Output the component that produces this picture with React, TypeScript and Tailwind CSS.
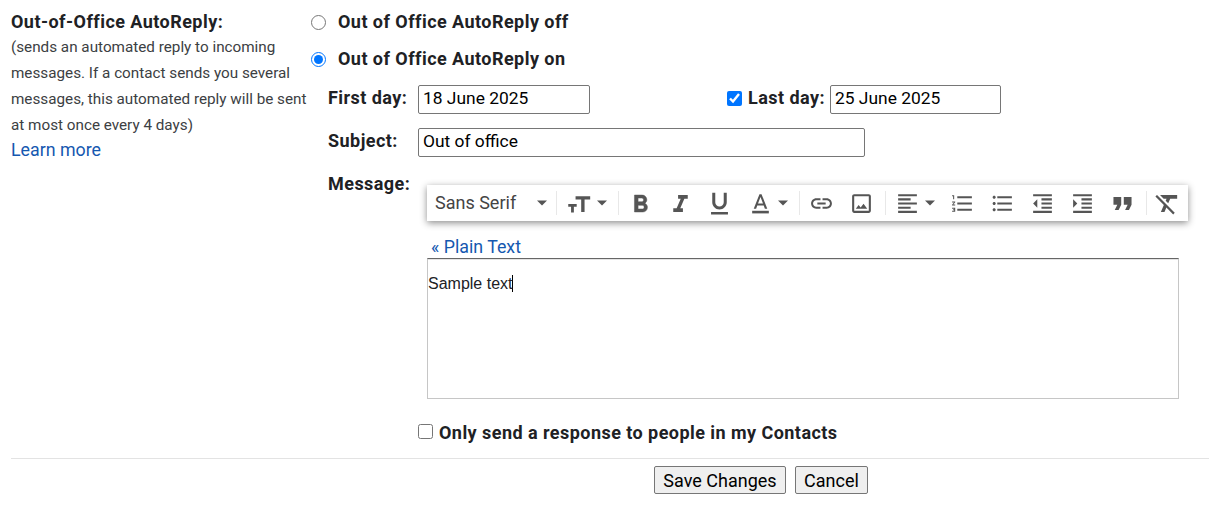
import React from "react";

const Arrow = ({ className = "" }: { className?: string }) => (
  <svg width="12" height="6" viewBox="0 0 12 6" className={`shrink-0 ${className}`}><path d="M1 0.5h10L6 5.5z" fill="#555" /></svg>
);

const Ico = ({ size = 25, children }: { size?: number; children: React.ReactNode }) => (
  <svg width={size} height={size} viewBox="0 0 24 24" fill="#555" className="shrink-0">{children}</svg>
);

const Sep = () => <div className="w-px h-[24px] bg-[#e8e8e8] shrink-0" />;

const Btn = ({ w = "w-[40px]", children }: { w?: string; children: React.ReactNode }) => (
  <div className={`${w} h-full flex items-center justify-center shrink-0`}>{children}</div>
);

function Toolbar() {
  return (
    <div className="w-[761px] h-[36px] flex items-center bg-white shadow-[0_2px_7px_rgba(0,0,0,0.45)] pl-[8px] font-['Roboto',sans-serif]">
      <span className="text-[18px] text-[#444] w-[101px] shrink-0 whitespace-nowrap pb-[2px]">Sans Serif</span>
      <Arrow />
      <div className="w-[8px] shrink-0" />
      <Sep />
      <div className="w-[10px] shrink-0" />
      <Btn w="w-[24px]">
        <Ico size={27}><path d="M9 5.500v3h5v11h3v-11h5v-3z" transform="translate(-0.5 0)" /><path d="M2 12.500h7.500v2.400H7v5H4.500v-5H2z" /></Ico>
      </Btn>
      <div className="w-[5px] shrink-0" />
      <Arrow />
      <div className="w-[10px] shrink-0" />
      <Sep />
      <Btn w="w-[43px]">
        <Ico size={29}><path stroke="#555" strokeWidth="0.4" d="M15.600 11.800c1-.7 1.650-1.750 1.650-2.800 0-2.300-1.750-4-4-4H7v14h7.050c2.100 0 3.700-1.700 3.700-3.800 0-1.500-.85-2.800-2.150-3.400zM10 7.500h3c.83 0 1.500.67 1.500 1.500s-.67 1.500-1.500 1.500h-3v-3zm3.500 9H10v-3h3.500c.83 0 1.500.67 1.500 1.500s-.67 1.500-1.500 1.500z" /></Ico>
      </Btn>
      <Btn w="w-[37px]">
        <Ico size={29}><path d="M10 5v3h2.200l-3.400 8H6v3h8v-3h-2.200l3.400-8H18V5z" /></Ico>
      </Btn>
      <Btn w="w-[41px]">
        <Ico size={29}><path d="M12 17c3.300 0 6-2.700 6-6V3h-2.500v8c0 1.900-1.600 3.500-3.500 3.500S8.500 12.900 8.500 11V3H6v8c0 3.300 2.700 6 6 6zM5 19v2h14v-2H5z" /></Ico>
      </Btn>
      <Btn w="w-[40px]">
        <Ico size={25}><path d="M11 3 5.500 17h2.300l1.100-3h6.200l1.100 3h2.300L13 3h-2zm-1.400 9L12 5.700 14.400 12H9.600z" /><rect x="4" y="19" width="16" height="2.500" /></Ico>
      </Btn>
      <Arrow className="-ml-[3px]" />
      <div className="w-[10px] shrink-0" />
      <Sep />
      <Btn w="w-[42px]">
        <Ico><path d="M3.900 12c0-1.710 1.390-3.100 3.100-3.100h4V7H7c-2.760 0-5 2.240-5 5s2.240 5 5 5h4v-1.900H7c-1.710 0-3.100-1.390-3.100-3.100zM8 13h8v-2H8v2zm9-6h-4v1.900h4c1.710 0 3.100 1.390 3.100 3.100s-1.390 3.100-3.100 3.100h-4V17h4c2.760 0 5-2.240 5-5s-2.240-5-5-5z" /></Ico>
      </Btn>
      <Btn w="w-[38px]">
        <Ico><path d="M19 3H5c-1.100 0-2 .9-2 2v14c0 1.100.9 2 2 2h14c1.100 0 2-.9 2-2V5c0-1.100-.9-2-2-2zm0 16H5V5h14v14zm-5.040-6.710-2.750 3.540-1.960-2.360L6.500 17h11l-3.540-4.710z" /></Ico>
      </Btn>
      <div className="w-[5px] shrink-0" />
      <Sep />
      <div className="w-[9px] shrink-0" />
      <Btn w="w-[24px]">
        <Ico><path d="M3 4h18v2H3zM3 8h12v2H3zM3 12h18v2H3zM3 16h12v2H3zM3 20h18v2H3z" transform="translate(0 -1)" /></Ico>
      </Btn>
      <div className="w-[5px] shrink-0" />
      <Arrow />
      <div className="w-[6px] shrink-0" />
      <Btn w="w-[40px]">
        <Ico><path d="M2 17h2v.5H3v1h1v.5H2v1h3v-4H2v1zm1-9h1V4H2v1h1v3zm-1 3h1.800L2 13.100v.9h3v-1H3.200L5 10.900V10H2v1zm5-6v2h14V5H7zm0 14h14v-2H7v2zm0-6h14v-2H7v2z" /></Ico>
      </Btn>
      <Btn w="w-[40px]">
        <Ico><path d="M4 10.500c-.83 0-1.500.67-1.500 1.500s.67 1.500 1.500 1.500 1.500-.67 1.500-1.500-.67-1.500-1.500-1.500zm0-6c-.83 0-1.500.67-1.500 1.500S3.170 7.500 4 7.500 5.500 6.830 5.500 6 4.830 4.500 4 4.500zm0 12c-.83 0-1.500.68-1.500 1.500s.68 1.500 1.500 1.500 1.500-.68 1.500-1.500-.67-1.500-1.500-1.500zM7 19h14v-2H7v2zm0-6h14v-2H7v2zm0-8v2h14V5H7z" /></Ico>
      </Btn>
      <Btn w="w-[40px]">
        <Ico><path d="M11 17h10v-2H11v2zm-8-5 4 4V8l-4 4zm0 9h18v-2H3v2zM3 3v2h18V3H3zm8 6h10V7H11v2zm0 4h10v-2H11v2z" /></Ico>
      </Btn>
      <Btn w="w-[40px]">
        <Ico><path d="M3 21h18v-2H3v2zM3 8v8l4-4-4-4zm8 9h10v-2H11v2zM3 3v2h18V3H3zm8 6h10V7H11v2zm0 4h10v-2H11v2z" /></Ico>
      </Btn>
      <Btn w="w-[40px]">
        <Ico size={31}><path d="M6 17h3l2-4V7H5v6h3zm8 0h3l2-4V7h-6v6h3z" /></Ico>
      </Btn>
      <div className="w-[4px] shrink-0" />
      <Sep />
      <Btn w="w-[40px]">
        <Ico size={29}><path d="M3.270 5 2 6.270l6.970 6.970L6.500 19h3l1.570-3.660L16.730 21 18 19.730 3.550 5.270 3.270 5zM6 5v.18L8.820 8h2.400l-.72 1.680 2.100 2.100L14.210 8H20V5H6z" /></Ico>
      </Btn>
    </div>
  );
}

export default function App() {
  const label = "font-bold text-[18px] tracking-[0.45px] leading-[24px] text-[#202124] whitespace-nowrap";
  const input = "h-[29px] border border-[#767676] rounded-[2px] px-[4px] pb-[3px] text-[17.4px] text-black outline-none bg-white font-['Roboto',sans-serif]";
  return (
    <div className="w-[1209px] h-[505px] bg-white overflow-hidden font-['Roboto',sans-serif] text-[#202124]">
      <div className="flex pt-[10px] h-[458px]">
        <div className="w-[300px] ml-[11px] shrink-0">
          <div className={label}>Out-of-Office AutoReply:</div>
          <p className="text-[15.25px] leading-[26px] text-[#3c4043] whitespace-nowrap">
            (sends an automated reply to incoming<br />
            messages. If a contact sends you several<br />
            messages, this automated reply will be sent<br />
            at most once every 4 days)
          </p>
          <a className="block text-[17.8px] leading-[24px] text-[#1558b0]">Learn more</a>
        </div>
        <div className="flex-1">
          <label className="flex items-center h-[24px]">
            <input type="radio" name="ar" className="w-[15px] h-[15px] m-0 shrink-0" />
            <span className={`${label} ml-[12px]`}>Out of Office AutoReply off</span>
          </label>
          <label className="flex items-center h-[24px] mt-[13px]">
            <input type="radio" name="ar" defaultChecked className="w-[15px] h-[15px] m-0 shrink-0" />
            <span className={`${label} ml-[12px]`}>Out of Office AutoReply on</span>
          </label>
          <div className="pl-[17px] mt-[14px]">
            <div className="flex items-center">
              <span className={`${label} w-[90px] shrink-0 pb-[3px]`}>First day:</span>
              <input className={`${input} w-[172px]`} defaultValue="18 June 2025" readOnly />
              <input type="checkbox" defaultChecked className="w-[15px] h-[15px] m-0 ml-[137px] shrink-0 relative -top-[1px]" />
              <span className={`${label} ml-[6px] mr-[5px] pb-[3px]`}>Last day:</span>
              <input className={`${input} w-[171px]`} defaultValue="25 June 2025" readOnly />
            </div>
            <div className="flex items-center mt-[14px]">
              <span className={`${label} w-[90px] shrink-0 pb-[3px]`}>Subject:</span>
              <input className={`${input} w-[447px]`} defaultValue="Out of office" readOnly />
            </div>
            <div className="flex mt-[15px]">
              <span className={`${label} w-[99px] shrink-0`}>Message:</span>
              <div className="pt-[13px]">
                <Toolbar />
                <a className="block text-[17.8px] leading-[24px] text-[#1558b0] ml-[4px] mt-[14px] -mb-[1px]">« Plain Text</a>
                <div className="w-[752px] h-[141px] mb-[1px] border border-[#c6c6c6] border-t-[#666666] shadow-[inset_0_1px_0_#e4e4e4] pt-[15px] text-[16px] leading-[20px] text-[#202124] font-['Liberation_Sans',sans-serif]">
                  <span className="border-r border-black">Sample text</span>
                </div>
              </div>
            </div>
            <label className="flex items-center ml-[90px] mt-[21px] h-[24px]">
              <input type="checkbox" className="w-[15px] h-[15px] m-0 shrink-0 relative -top-[2px]" />
              <span className={`${label} ml-[6px]`}>Only send a response to people in my Contacts</span>
            </label>
          </div>
        </div>
      </div>
      <div className="ml-[11px] border-t border-[#e3e3e3] flex justify-start pl-[643px] pt-[7px] gap-[9px]">
        <button className="h-[28px] w-[132px] border border-[#767676] rounded-[2px] bg-[#efefef] text-[18px] text-black pb-[2px]">Save Changes</button>
        <button className="h-[28px] w-[73px] border border-[#767676] rounded-[2px] bg-[#efefef] text-[18px] text-black pb-[2px]">Cancel</button>
      </div>
    </div>
  );
}
